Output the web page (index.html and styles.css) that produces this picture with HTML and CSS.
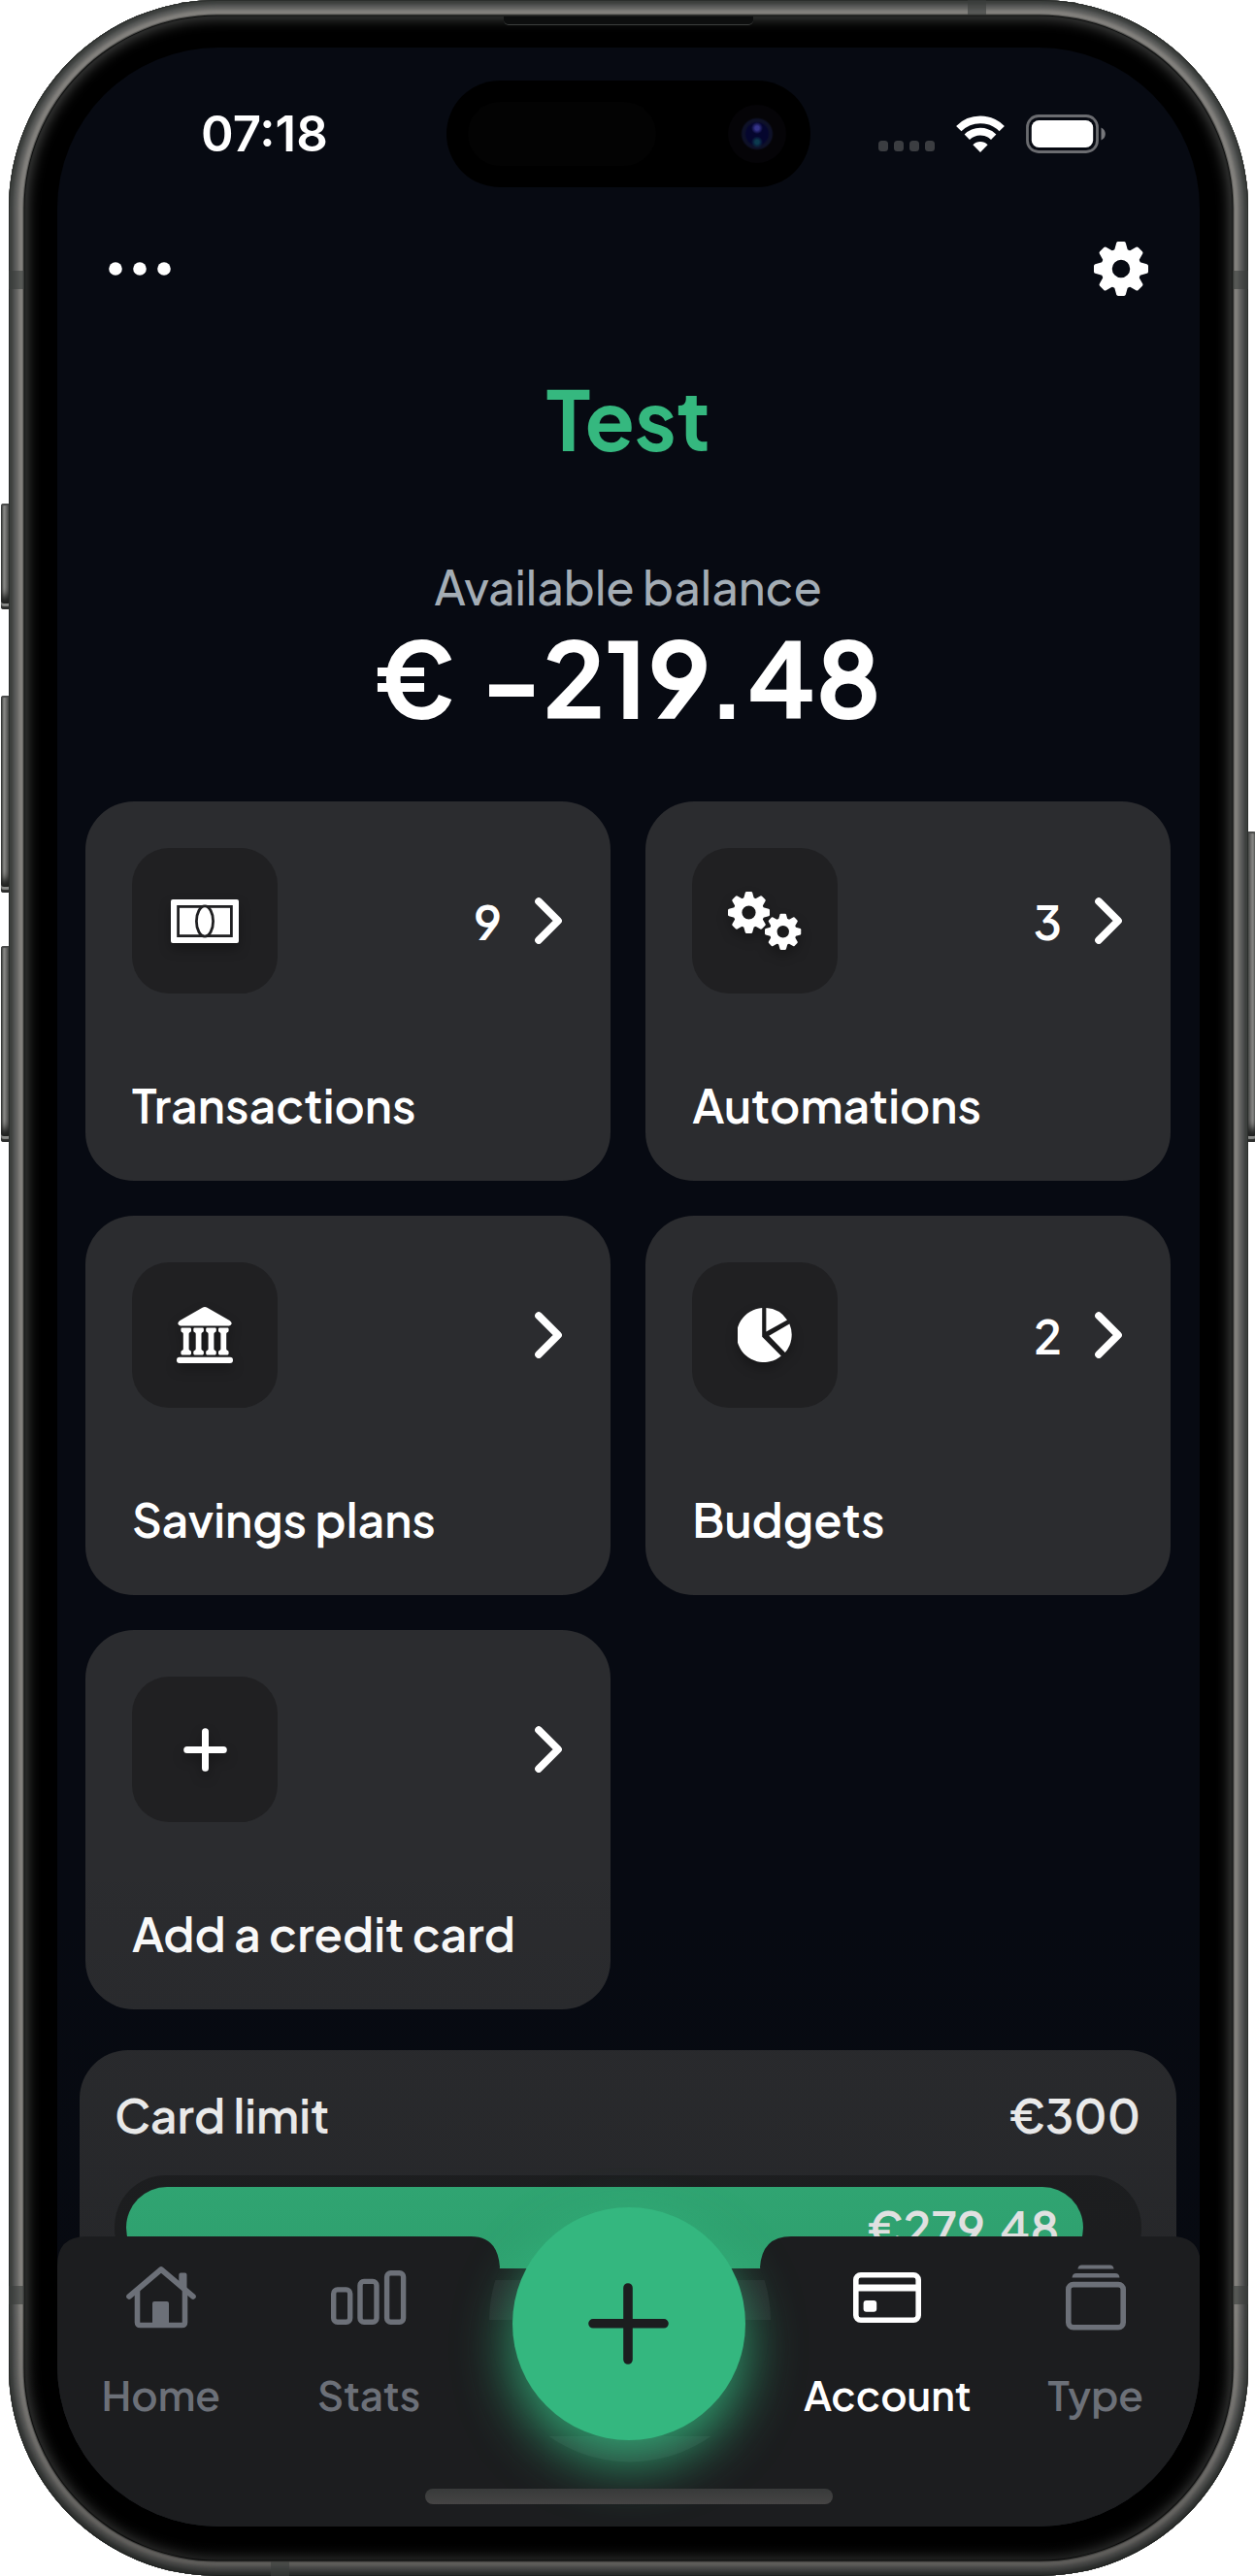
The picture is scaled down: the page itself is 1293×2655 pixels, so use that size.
FILE: index.html
```html
<!DOCTYPE html>
<html lang="en">
<head>
<meta charset="utf-8">
<title>Account</title>
<link rel="stylesheet" href="styles.css">
</head>
<body>
<svg class="defs" width="0" height="0" aria-hidden="true">
  <defs>
    <path id="tooth" d="M-7.5-17 L-4.8-26.6 Q-4.4-28-3-28 H3 Q4.4-28 4.8-26.6 L7.5-17Z"/>
    <symbol id="gear" viewBox="-28 -28 56 56">
      <circle r="15" fill="none" stroke="currentColor" stroke-width="11.5"/>
      <g fill="currentColor">
        <use href="#tooth"/><use href="#tooth" transform="rotate(45)"/><use href="#tooth" transform="rotate(90)"/><use href="#tooth" transform="rotate(135)"/><use href="#tooth" transform="rotate(180)"/><use href="#tooth" transform="rotate(225)"/><use href="#tooth" transform="rotate(270)"/><use href="#tooth" transform="rotate(315)"/>
      </g>
    </symbol>
    <symbol id="chevron" viewBox="0 0 28 48"><path d="M4 4 L24 24 L4 44" fill="none" stroke="currentColor" stroke-width="7.6" stroke-linecap="round" stroke-linejoin="round"/></symbol>
  </defs>
</svg>
<div class="stage">
  <i class="key key-action"></i><i class="key key-up"></i><i class="key key-down"></i><i class="key key-power"></i>
  <div class="device">
    <i class="band band-lt"></i><i class="band band-rt"></i><i class="band band-lb"></i><i class="band band-rb"></i><i class="band band-top"></i><i class="band band-bottom"></i>
    <i class="speaker"></i>
    <main class="screen">
      <div class="status">
        <span class="time">07:18</span>
        <div class="island"><i class="sensor"></i><i class="lens"></i></div>
        <div class="indicators">
          <div class="signal"><i></i><i></i><i></i><i></i></div>
          <svg class="wifi" width="50" height="38" viewBox="0 0 50 38">
            <g fill="none" stroke="#fff" stroke-width="7.6">
              <path d="M2.8 13.6 A31.4 31.4 0 0 1 47.2 13.6"/>
              <path d="M11.3 22.3 A19.4 19.4 0 0 1 38.7 22.3"/>
            </g>
            <path d="M25 38 L17.4 30.2 A10.8 10.8 0 0 1 32.6 30.2Z" fill="#fff"/>
          </svg>
          <svg class="battery" width="82" height="40" viewBox="0 0 82 40">
            <rect x="1.5" y="1.5" width="72" height="37" rx="11.5" fill="none" stroke="#6b6c70" stroke-width="2.8"/>
            <rect x="5.8" y="6" width="63.4" height="28" rx="7.5" fill="#fff"/>
            <path d="M77.5 13.5 Q81.8 15.5 81.8 20 Q81.8 24.5 77.5 26.5Z" fill="#77787c"/>
          </svg>
        </div>
      </div>

      <header class="topbar">
        <svg width="64" height="14" viewBox="0 0 64 14" fill="#fff"><circle cx="7" cy="7" r="6.8"/><circle cx="32" cy="7" r="6.8"/><circle cx="57" cy="7" r="6.8"/></svg>
        <svg class="settings" width="56" height="56"><use href="#gear"/></svg>
      </header>

      <h1 class="title">Test</h1>
      <p class="caption">Available balance</p>
      <p class="balance">€ -219.48</p>

      <section class="grid">
        <article class="card">
          <div class="card-top">
            <div class="tile"><svg width="70" height="45" viewBox="0 0 70 45"><rect width="70" height="45" rx="2" fill="#fff"/><g fill="none" stroke="#202022" stroke-width="2.8"><rect x="7.6" y="7.4" width="54.8" height="30.2"/><ellipse cx="35" cy="22.5" rx="8.6" ry="15.6" fill="#fff"/></g></svg></div>
            <span class="count">9</span><svg class="chev" width="28" height="48"><use href="#chevron"/></svg>
          </div>
          <h2>Transactions</h2>
        </article>
        <article class="card">
          <div class="card-top">
            <div class="tile"><svg width="76" height="60" viewBox="0 0 76 60"><use href="#gear" x="0" y="0" width="43" height="43"/><use href="#gear" x="38" y="22.5" width="37.5" height="37.5"/></svg></div>
            <span class="count">3</span><svg class="chev" width="28" height="48"><use href="#chevron"/></svg>
          </div>
          <h2>Automations</h2>
        </article>
        <article class="card">
          <div class="card-top">
            <div class="tile"><svg width="58" height="58" viewBox="0 0 58 58" fill="#fff">
              <path d="M26.5 .8 Q29-.7 31.5 .8 L54.6 14 Q57 15.6 56.6 17.6 Q56 19.4 54 19.4 H4 Q2 19.4 1.4 17.6 Q1 15.6 3.4 14Z"/>
              <path id="col" d="M5.6 21.6 H13.8 Q15 21.6 15 23 V24.4 Q15 25.8 13.2 26.4 Q12.6 26.6 12.6 28 V43 Q12.6 44.4 13.2 44.6 Q15 45.2 15 46.6 V48 Q15 49.4 13.8 49.4 H5.6 Q4.4 49.4 4.4 48 V46.6 Q4.4 45.2 6.2 44.6 Q6.8 44.4 6.8 43 V28 Q6.8 26.6 6.2 26.4 Q4.4 25.8 4.4 24.4 V23 Q4.4 21.6 5.6 21.6Z"/><use href="#col" x="12.9"/><use href="#col" x="25.8"/><use href="#col" x="38.6"/>
              <rect y="51.8" width="58" height="6.2" rx="3"/></svg></div>
            <svg class="chev" width="28" height="48"><use href="#chevron"/></svg>
          </div>
          <h2>Savings plans</h2>
        </article>
        <article class="card">
          <div class="card-top">
            <div class="tile"><svg width="56" height="56" viewBox="-28 -28 56 56" fill="#fff"><path d="M-2.8-27.9 V1.7 L16.8 21.6 A28 28 0 1 1-2.8-27.9Z"/><path d="M1.4-28 A28 28 0 0 1 23-15.6 L1.4-3.4Z"/><path d="M25.4-11.4 A28 28 0 0 1 20.9 17.9 L4.3 .8Z"/></svg></div>
            <span class="count">2</span><svg class="chev" width="28" height="48"><use href="#chevron"/></svg>
          </div>
          <h2>Budgets</h2>
        </article>
        <article class="card">
          <div class="card-top">
            <div class="tile"><svg width="45" height="45" viewBox="0 0 45 45"><path d="M22.5 3.7 V41.3 M3.7 22.5 H41.3" stroke="#fff" stroke-width="7" stroke-linecap="round"/></svg></div>
            <svg class="chev" width="28" height="48"><use href="#chevron"/></svg>
          </div>
          <h2>Add a credit card</h2>
        </article>
      </section>

      <section class="limit">
        <div class="limit-head"><span>Card limit</span><span>€300</span></div>
        <div class="track"><div class="fill" style="width:95.4%"><span>€279.48</span></div></div>
      </section>

      <div class="fade"></div>
      <nav class="tabbar">
        <svg class="bar-shape" width="1178" height="330" viewBox="0 0 1178 330">
          <path d="M472 206 H708 V260 H472Z" fill="#292b2d"/>
          <path fill="#1c1d1f" d="M0 30 Q0 0 30 0 H426 Q454 0 456 32 A145 145 0 1 0 724 32 Q726 0 756 0 H1148 Q1178 0 1178 30 V330 H0Z"/>
        </svg>
        <button class="add"><svg width="84" height="84" viewBox="0 0 84 84"><path d="M41 5 V79 M5 41.8 H78" stroke="#1c1d1f" stroke-width="9.6" stroke-linecap="round"/></svg></button>
        <div class="tabs">
          <a class="tab"><svg width="72" height="64" viewBox="0 0 72 64" fill="none" stroke="currentColor" stroke-width="5.6" stroke-linecap="round" stroke-linejoin="round"><path d="M3 31 L36 3 L69 31"/><path d="M11.5 25 V57.5 Q11.5 60.5 14.5 60.5 H57.5 Q60.5 60.5 60.5 57.5 V25"/><path d="M56.3 8.5 H60.5 V23 L56.3 19Z" fill="currentColor" stroke-width="4"/><path d="M27 61 V38 Q27 36 29 36 H42 Q44 36 44 38 V61Z" fill="currentColor" stroke="none"/></svg><span>Home</span></a>
          <a class="tab"><svg width="78" height="56" viewBox="0 0 78 56" fill="none" stroke="currentColor" stroke-width="5.4"><rect x="2.7" y="19.9" width="17" height="33.4" rx="4"/><rect x="30" y="11.4" width="17" height="41.9" rx="4"/><rect x="57.6" y="2.7" width="17" height="50.6" rx="4"/></svg><span>Stats</span></a>
          <i></i>
          <a class="tab active"><svg width="70" height="52" viewBox="0 0 70 52" fill="none" stroke="currentColor" stroke-width="5.6"><rect x="2.8" y="2.8" width="64.4" height="46.4" rx="5"/><path d="M3 16 H67" stroke-width="7"/><rect x="10.6" y="29" width="13.6" height="11.8" rx="3" fill="currentColor" stroke="none"/></svg><span>Account</span></a>
          <a class="tab"><svg width="62" height="68" viewBox="0 0 62 68"><rect x="2.8" y="20.6" width="56.4" height="44.2" rx="5" fill="none" stroke="currentColor" stroke-width="5.6"/><path d="M6.5 13.4 Q7 9 11 9 H51 Q55 9 55.5 13.4Z M12.4 4.4 Q13 .4 16.5 .4 H45.5 Q49 .4 49.6 4.4Z" fill="currentColor"/></svg><span>Type</span></a>
        </div>
        <i class="indicator"></i>
      </nav>
    </main>
  </div>
</div>
</body>
</html>
```
FILE: styles.css
```css
* { box-sizing: border-box; }
body { margin: 0; background: #fff; font-family: "Plus Jakarta Sans", Inter, "Open Sans", sans-serif; color: #fff; }
.defs { position: absolute; }
svg { display: block; flex: none; }
h1, h2, p { margin: 0; }

.stage { position: relative; width: 1293px; height: 2655px; padding: 0 7px 0 9px; overflow: hidden; }
.key { position: absolute; border-radius: 3px; background: linear-gradient(90deg, #3c3e3d 0, #b5b5b2 30%, #7b7b79 60%, #3d3f3e 100%); box-shadow: inset 0 2px 1px #4a4b4a, inset 0 -3px 1px #2c2d2c, inset 0 -6px 0 #8a8b89, inset 0 -14px 8px #1f201f; }
.key-action { left: 1px; top: 519px; width: 10px; height: 109px; }
.key-up { left: 1px; top: 717px; width: 10px; height: 203px; }
.key-down { left: 1px; top: 975px; width: 10px; height: 202px; }
.key-power { right: -1px; top: 857px; width: 10px; height: 320px; background: linear-gradient(270deg, #5c5e5d 0, #b5b5b2 30%, #7b7b79 60%, #3d3f3e 100%); }

.device { position: relative; height: 2655px; padding: 49px 50px 51px 49.5px; border-radius: 215px; background: #000; box-shadow: inset 0 0 0 1px #2b2e2c, inset 0 0 3px 4px #3b3e3c, inset 0 0 4px 7px #4f5150, inset 0 0 3px 10px #6a6a68, inset 0 0 1px 14.5px #84827e, inset 0 0 0 15.5px #4c4c4a, inset 0 0 1px 16.5px #0b0c0c, inset 0 0 14px 19px #474847; }
.device::before { content: ""; position: absolute; inset: 0; border-radius: inherit; background: linear-gradient(transparent 2380px, rgba(0, 0, 0, .3)); }
.band { position: absolute; background: rgba(58, 61, 60, .6); }
.band-lt { left: 0; top: 279px; width: 16px; height: 19px; }
.band-rt { right: 0; top: 279px; width: 16px; height: 19px; }
.band-lb { left: 0; top: 2356px; width: 16px; height: 19px; }
.band-rb { right: 0; top: 2356px; width: 16px; height: 19px; }
.band-top { left: 988px; top: 0; width: 19px; height: 15px; }
.band-bottom { left: 270px; bottom: 0; width: 19px; height: 15px; }
.speaker { position: absolute; left: 510px; top: 17px; width: 257px; height: 9px; background: #0d0e0e; border-bottom: 1px solid #3c3e3d; border-radius: 0 0 5px 5px; }

.screen { position: relative; display: flex; flex-direction: column; height: 2555px; border-radius: 166px; overflow: hidden; background: #070a12; }

.status { display: grid; grid-template-columns: 1fr 375px 1fr; align-items: center; height: 177px; flex: none; }
.time { padding-left: 148.5px; font: 600 51px/60px Inter, sans-serif; }
.island { display: flex; align-items: center; justify-content: space-between; height: 110px; padding: 0 25px 0 22px; border-radius: 55px; background: #000; }
.sensor { width: 194px; height: 66px; border-radius: 33px; background: #030303; }
.lens { width: 60px; height: 60px; border-radius: 50%; background: radial-gradient(circle at 50% 40%, #35348a 0 2px, transparent 6px), radial-gradient(circle at 50% 64%, #0c3a4e 0 2px, transparent 6px), radial-gradient(circle, #05062e 0 11px, #0e1128 13px 15px, #050407 17px); }
.indicators { display: flex; align-items: center; justify-content: flex-end; gap: 22px; padding-right: 97px; }
.signal { display: flex; gap: 5.6px; margin-top: 26px; }
.signal i { width: 10.4px; height: 11px; border-radius: 3.5px; background: #3b3d41; }

.topbar { display: flex; align-items: center; justify-content: space-between; flex: none; height: 102px; padding: 0 53px; }
.title { margin-top: 53px; font-size: 84px; line-height: 100px; font-weight: 700; text-align: center; color: #35b87f; }
.caption { margin-top: 94px; font-size: 48px; line-height: 60px; font-weight: 500; text-align: center; color: #a4adb5; }
.balance { margin-top: 2px; font-size: 108px; line-height: 120px; font-weight: 700; word-spacing: 6px; text-align: center; }

.grid { display: grid; grid-template-columns: 1fr 1fr; grid-auto-rows: 390.5px; gap: 36.5px; margin: 69px 30px 0 29.5px; flex: none; }
.card { display: flex; flex-direction: column; justify-content: space-between; padding: 48px 50px 48px 48px; border-radius: 50px; background: #2b2c2f; }
.card-top { display: flex; align-items: center; }
.tile { display: flex; align-items: center; justify-content: center; width: 150px; height: 150px; margin-right: auto; border-radius: 38px; background: #202022; }
.tile svg { filter: drop-shadow(0 6px 6px rgba(0, 0, 0, .3)); }
.count { margin-right: 34px; padding-top: 2px; font-size: 48px; line-height: 60px; font-weight: 600; }
.card h2 { font-size: 48px; line-height: 60px; font-weight: 600; white-space: nowrap; }

.limit { flex: none; margin: 42px 24px 0 23.5px; padding: 37px 36px 42px; border-radius: 50px; background: #2b2c2f; }
.limit-head { display: flex; justify-content: space-between; padding: 0 1px 0 0; font-size: 48px; line-height: 60px; font-weight: 600; }
.track { margin-top: 32px; padding: 12px; border-radius: 53px; background: #1f2022; }
.fill { display: flex; align-items: center; justify-content: flex-end; height: 84px; padding-right: 25px; border-radius: 42px; background: #35b87f; font-size: 48px; font-weight: 600; }

.fade { position: absolute; left: 0; right: 0; bottom: 0; height: 700px; background: linear-gradient(rgba(8, 9, 9, 0) 0, rgba(8, 9, 9, .13) 400px, rgba(8, 9, 9, .1) 487px, #1c1d1f 487px); }
.tabbar { position: absolute; left: 0; right: 0; bottom: 0; height: 299px; }
.bar-shape { position: absolute; left: 0; top: 0; }
.add { position: absolute; left: 469.5px; top: -30px; width: 240px; height: 240px; padding: 0; display: flex; align-items: center; justify-content: center; border: 0; border-radius: 50%; background: #34b77f; box-shadow: 0 24px 56px rgba(52, 183, 127, .85); }
.tabs { position: relative; display: grid; grid-template-columns: 1fr 1fr 320px 1fr 1fr; padding: 27px 0 0; }
.tab { display: grid; grid-template-rows: 72px 50px; row-gap: 38.5px; place-items: center; font-size: 42px; line-height: 50px; font-weight: 600; color: #6c7078; }
.tab.active { color: #fff; }
.indicator { position: absolute; left: 379px; bottom: 23.5px; width: 420px; height: 15.5px; border-radius: 8px; background: linear-gradient(#383a3a, #454444); }
```
